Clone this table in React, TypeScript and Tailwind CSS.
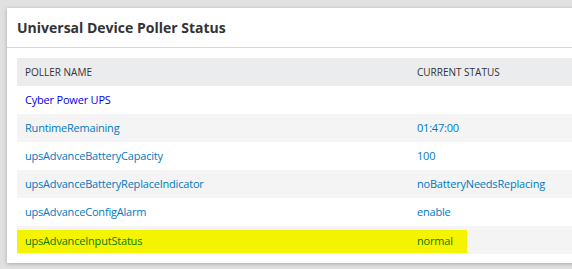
const rows = [
  { name: "Cyber Power UPS", status: "", top: true },
  { name: "RuntimeRemaining", status: "01:47:00" },
  { name: "upsAdvanceBatteryCapacity", status: "100" },
  { name: "upsAdvanceBatteryReplaceIndicator", status: "noBatteryNeedsReplacing" },
  { name: "upsAdvanceConfigAlarm", status: "enable" },
];

export default function App() {
  return (
    <div
      className="w-[572px] h-[269px] overflow-hidden bg-[#e1e1e1] pt-[8px] pl-[7px]"
      style={{ fontFamily: '"Open Sans", "Liberation Sans", sans-serif' }}
    >
      <div className="w-[640px] bg-white shadow-[0_1px_4px_rgba(0,0,0,0.25)]">
        <div className="h-[40px] border-b border-[#d6d6d6] pl-[10px] flex items-center">
          <h1 className="text-[14px] font-bold text-[#333]">Universal Device Poller Status</h1>
        </div>
        <div className="pt-[10px] pl-[10px] pb-[9px]">
          <div className="flex h-[28px] items-center bg-[#ebecee] text-[10px] text-[#333]">
            <div className="w-[400px] pl-[8px]">POLLER NAME</div>
            <div>CURRENT STATUS</div>
          </div>
          {rows.map((r, i) => (
            <div
              key={r.name}
              className={`flex h-[28px] items-center text-[11px] tracking-[-0.2px] ${i % 2 === 1 ? "bg-[#f4f4f4]" : "bg-white"}`}
            >
              <div className={`w-[400px] pl-[8px] ${r.top ? "text-[#0000ee]" : "text-[#0079c1]"}`}>{r.name}</div>
              <div className="text-[#0079c1]">{r.status}</div>
            </div>
          ))}
          <div className="h-[28px] bg-[#f4f4f4] pt-[4px]">
            <div className="flex h-[23px] w-[450px] items-center bg-[#f4f400] text-[11px] tracking-[-0.2px] text-[#0a7900]">
              <div className="w-[400px] pl-[8px]">upsAdvanceInputStatus</div>
              <div>normal</div>
            </div>
          </div>
        </div>
      </div>
    </div>
  );
}
